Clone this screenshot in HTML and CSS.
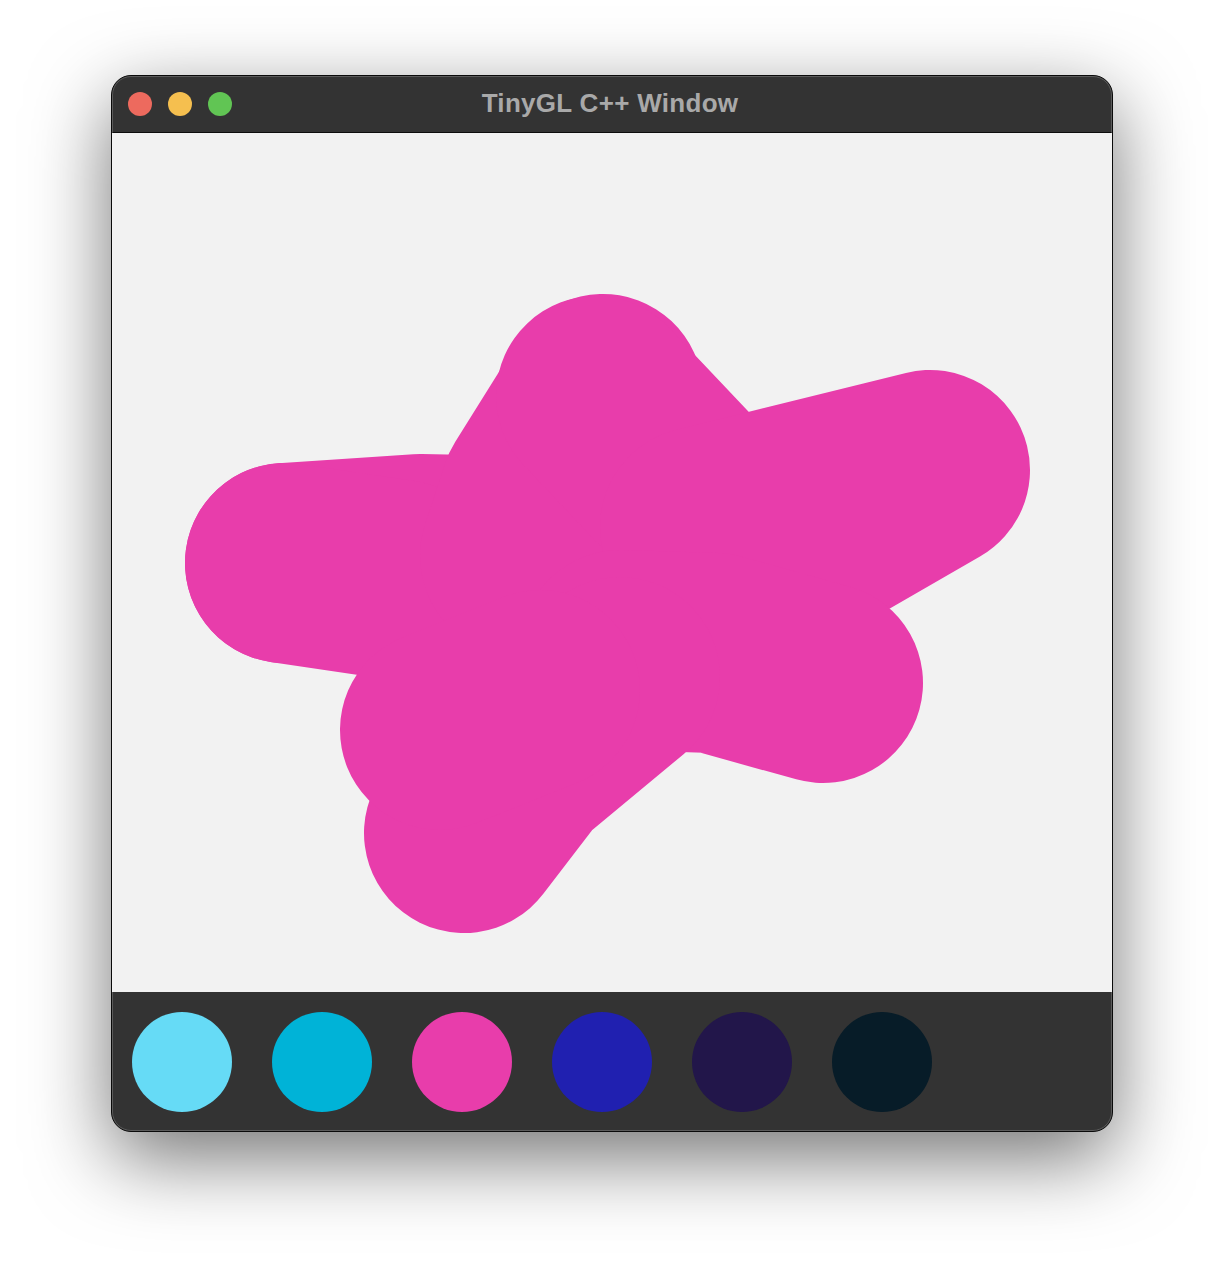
FILE: index.html
```html
<!DOCTYPE html>
<html>
<head>
<meta charset="utf-8">
<title>TinyGL C++ Window</title>
<link rel="stylesheet" href="styles.css">
</head>
<body>
<div class="stage">
  <div class="window">
    <div class="titlebar">
      <div class="lights">
        <span class="light red"></span>
        <span class="light yellow"></span>
        <span class="light green"></span>
      </div>
      <div class="title">TinyGL C++ Window</div>
      <div class="spacer"></div>
    </div>
    <div class="canvas">
      <svg class="drawing" viewBox="112 133 1000 859" width="1000" height="859">
        <polygon fill="#e83dab" points="420,556 540,495 685,490 700,527 800,545 700,650 620,680 520,700 440,730 420,600"/>
        <g fill="none" stroke="#e83dab" stroke-width="200" stroke-linecap="round" stroke-linejoin="round">
          <polyline points="285,563 420,554 525,556"/>
          <polyline points="285,563 400,580"/>
          <polyline points="603,394 540,495 520,556"/>
          <polyline points="596,396 685,490"/>
          <polyline points="700,527 930,470 800,545"/>
          <polyline points="823,683 715,653 620,650"/>
          <polyline points="464,833 520,760 620,677"/>
          <polyline points="440,730 540,690"/>
        </g>
      </svg>
    </div>
    <div class="palette">
      <span class="swatch c1"></span>
      <span class="swatch c2"></span>
      <span class="swatch c3"></span>
      <span class="swatch c4"></span>
      <span class="swatch c5"></span>
      <span class="swatch c6"></span>
    </div>
  </div>
</div>
</body>
</html>
```
FILE: styles.css
```css
html, body {
  margin: 0;
  padding: 0;
  background: #ffffff;
}
body {
  width: 1224px;
  height: 1280px;
  overflow: hidden;
  font-family: "Liberation Sans", Arial, sans-serif;
}
.stage {
  display: flex;
  justify-content: center;
  padding-top: 75px;
}
.window {
  position: relative;
  width: 1000px;
  border: 1px solid #0a0a0a;
  border-radius: 20px;
  overflow: hidden;
  background: #333333;
  box-shadow: 0 26px 80px rgba(0, 0, 0, 0.55);
}
.window::after {
  content: "";
  position: absolute;
  inset: 0;
  border: 1px solid rgba(255, 255, 255, 0.2);
  border-radius: 19px;
  pointer-events: none;
}
.titlebar {
  height: 56px;
  display: grid;
  grid-template-columns: 1fr auto 1fr;
  align-items: center;
  background: #333333;
  border-bottom: 1px solid #0d0d0d;
}
.lights {
  display: flex;
  gap: 16px;
  padding-left: 16px;
}
.light {
  width: 24px;
  height: 24px;
  border-radius: 50%;
  display: block;
}
.red { background: #ed6a5e; }
.yellow { background: #f5bf4f; }
.green { background: #61c554; }
.title {
  color: #a9a9a9;
  font-weight: bold;
  font-size: 26px;
  letter-spacing: 0.3px;
  line-height: 30px;
  margin-top: -2px;
  margin-right: 4px;
}
.canvas {
  height: 859px;
  background: #f2f2f2;
}
.drawing {
  display: block;
}
.palette {
  height: 139px;
  box-sizing: border-box;
  padding: 20px 20px 19px;
  display: flex;
  gap: 40px;
  background: #333333;
}
.swatch {
  width: 100px;
  height: 100px;
  border-radius: 50%;
  display: block;
}
.c1 { background: #66dbf6; }
.c2 { background: #00b3d7; }
.c3 { background: #e83dab; }
.c4 { background: #2020b0; }
.c5 { background: #22164a; }
.c6 { background: #071c28; }
```
